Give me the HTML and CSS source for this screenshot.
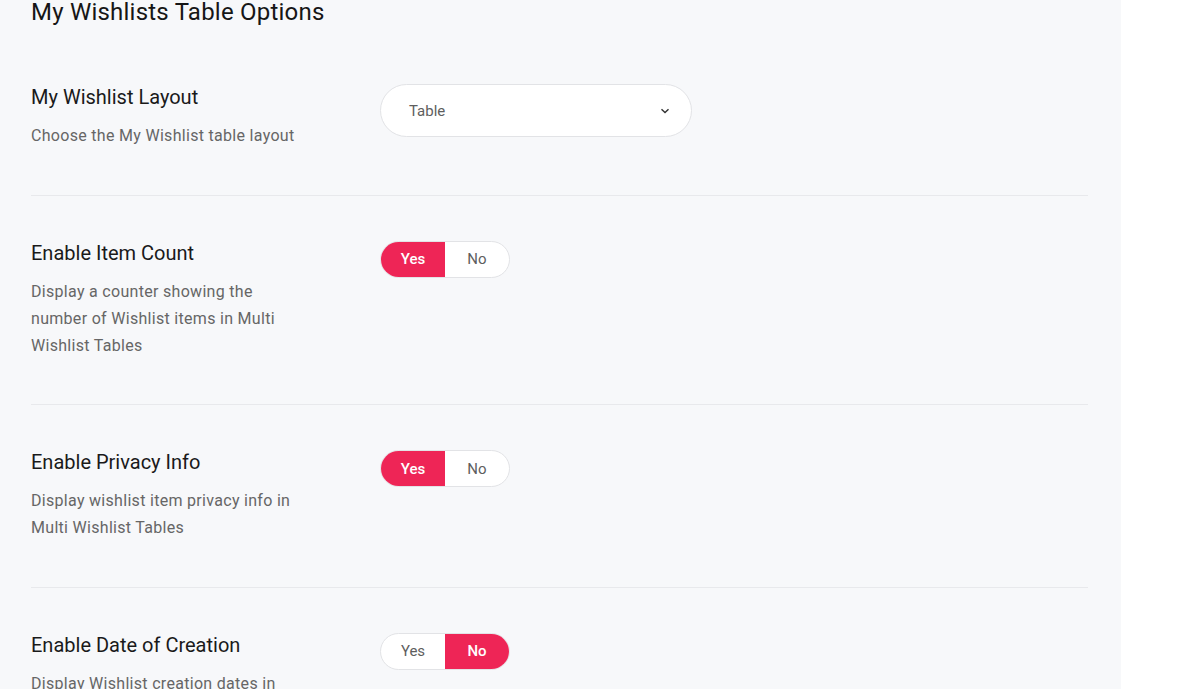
FILE: index.html
```html
<!DOCTYPE html>
<html lang="en">
<head>
  <meta charset="UTF-8" />
  <meta name="viewport" content="width=device-width, initial-scale=1.0" />
  <title>My Wishlists Table Options</title>
  <link rel="stylesheet" href="styles.css">
</head>
<body>
  <div class="panel">
    <h1 class="panel-title">My Wishlists Table Options</h1>

    <div class="option-row">
      <div class="option-info">
        <h3>My Wishlist Layout</h3>
        <p>Choose the My Wishlist table layout</p>
      </div>
      <div class="option-control">
        <div class="select-box">
          <span>Table</span>
          <svg class="chevron" width="10" height="6" viewBox="0 0 10 6"><path d="M1.5 1.2 5 4.6 8.5 1.2" fill="none" stroke="#333" stroke-width="1.4"/></svg>
        </div>
      </div>
    </div>

    <div class="option-row">
      <div class="option-info">
        <h3>Enable Item Count</h3>
        <p>Display a counter showing the number of Wishlist items in Multi Wishlist Tables</p>
      </div>
      <div class="option-control">
        <div class="toggle">
          <span class="active">Yes</span>
          <span>No</span>
        </div>
      </div>
    </div>

    <div class="option-row">
      <div class="option-info">
        <h3>Enable Privacy Info</h3>
        <p>Display wishlist item privacy info in Multi Wishlist Tables</p>
      </div>
      <div class="option-control">
        <div class="toggle">
          <span class="active">Yes</span>
          <span>No</span>
        </div>
      </div>
    </div>

    <div class="option-row">
      <div class="option-info">
        <h3>Enable Date of Creation</h3>
        <p>Display Wishlist creation dates in Multi Wishlist Tables</p>
      </div>
      <div class="option-control">
        <div class="toggle">
          <span>Yes</span>
          <span class="active">No</span>
        </div>
      </div>
    </div>
  </div>
</body>
</html>
```

FILE: styles.css
```css
* {
  box-sizing: border-box;
  font-family: Roboto, 'Liberation Sans', sans-serif;
}
body {
  margin: 0;
  padding: 0;
  background: #fff;
  overflow: hidden;
  height: 689px;
}
.panel {
  width: 1121px;
  min-height: 689px;
  background: #f7f8fa;
  padding: 0 33px 0 31px;
}
.panel-title {
  margin: 0;
  font-size: 24px;
  font-weight: 400;
  letter-spacing: 0.22px;
  line-height: 24px;
  color: #161616;
  height: 40px;
}
.option-row {
  display: flex;
  padding: 45px 0 45.5px;
  border-bottom: 1px solid #e8e9ec;
}
.option-info {
  width: 349px;
  flex-shrink: 0;
}
.option-info h3 {
  margin: 0;
  font-size: 20px;
  font-weight: 400;
  line-height: 24px;
  color: #1a1a1a;
}
.option-info p {
  margin: 13px 0 0;
  width: 275px;
  font-size: 16px;
  letter-spacing: 0.3px;
  line-height: 27px;
  color: #666;
}
.option-control {
  flex: 1;
}
.select-box {
  width: 312px;
  height: 53px;
  margin-top: -1px;
  background: #fff;
  border: 1px solid #e2e3e6;
  border-radius: 27px;
  display: flex;
  align-items: center;
  justify-content: space-between;
  padding: 0 21px 0 28px;
  font-size: 15px;
  color: #5e5e5e;
}
.toggle {
  display: inline-flex;
  height: 37px;
  border: 1px solid #e2e3e6;
  border-radius: 19px;
  overflow: hidden;
  background: #fff;
}
.toggle span {
  width: 64px;
  display: flex;
  align-items: center;
  justify-content: center;
  font-size: 15px;
  color: #5e5e5e;
}
.toggle span.active {
  background: #ee2556;
  color: #fff;
  font-weight: 500;
}
```
